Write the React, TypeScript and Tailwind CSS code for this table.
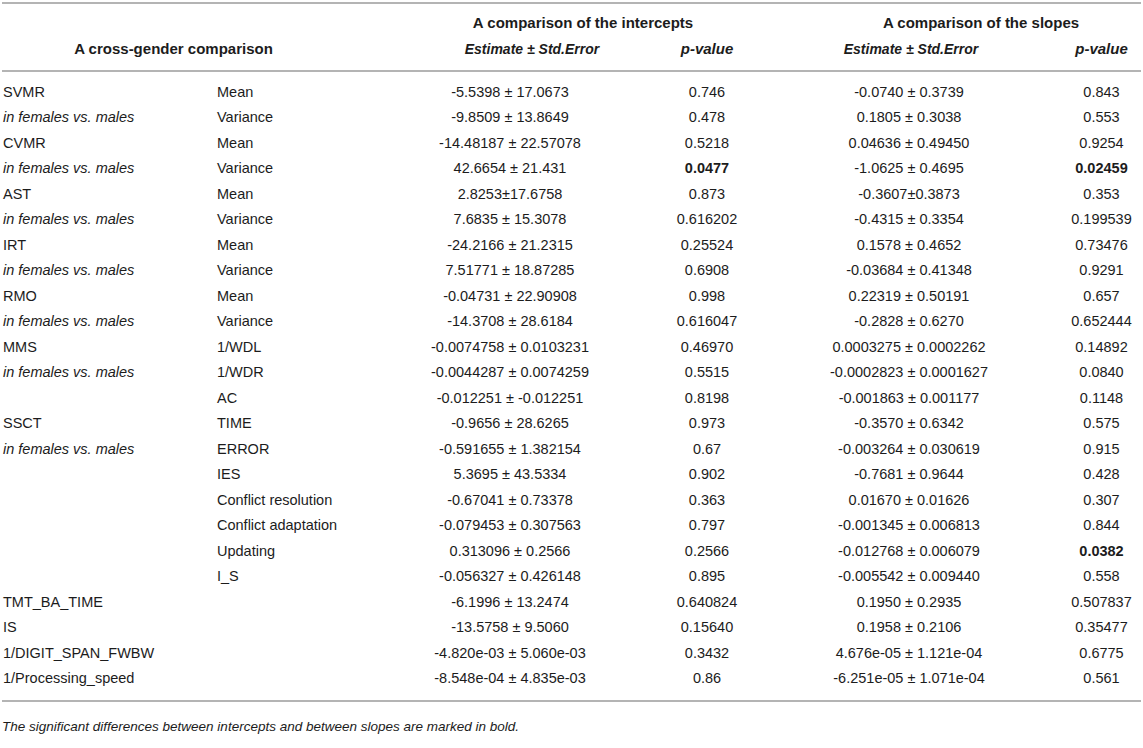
const rows: [string, string, string, string, string, string, boolean?, boolean?][] = [
  ['SVMR', 'Mean', '-5.5398 ± 17.0673', '0.746', '-0.0740 ± 0.3739', '0.843'],
  ['in females vs. males', 'Variance', '-9.8509 ± 13.8649', '0.478', '0.1805 ± 0.3038', '0.553'],
  ['CVMR', 'Mean', '-14.48187 ± 22.57078', '0.5218', '0.04636 ± 0.49450', '0.9254'],
  ['in females vs. males', 'Variance', '42.6654 ± 21.431', '0.0477', '-1.0625 ± 0.4695', '0.02459', true, true],
  ['AST', 'Mean', '2.8253±17.6758', '0.873', '-0.3607±0.3873', '0.353'],
  ['in females vs. males', 'Variance', '7.6835 ± 15.3078', '0.616202', '-0.4315 ± 0.3354', '0.199539'],
  ['IRT', 'Mean', '-24.2166 ± 21.2315', '0.25524', '0.1578 ± 0.4652', '0.73476'],
  ['in females vs. males', 'Variance', '7.51771 ± 18.87285', '0.6908', '-0.03684 ± 0.41348', '0.9291'],
  ['RMO', 'Mean', '-0.04731 ± 22.90908', '0.998', '0.22319 ± 0.50191', '0.657'],
  ['in females vs. males', 'Variance', '-14.3708 ± 28.6184', '0.616047', '-0.2828 ± 0.6270', '0.652444'],
  ['MMS', '1/WDL', '-0.0074758 ± 0.0103231', '0.46970', '0.0003275 ± 0.0002262', '0.14892'],
  ['in females vs. males', '1/WDR', '-0.0044287 ± 0.0074259', '0.5515', '-0.0002823 ± 0.0001627', '0.0840'],
  ['', 'AC', '-0.012251 ± -0.012251', '0.8198', '-0.001863 ± 0.001177', '0.1148'],
  ['SSCT', 'TIME', '-0.9656 ± 28.6265', '0.973', '-0.3570 ± 0.6342', '0.575'],
  ['in females vs. males', 'ERROR', '-0.591655 ± 1.382154', '0.67', '-0.003264 ± 0.030619', '0.915'],
  ['', 'IES', '5.3695 ± 43.5334', '0.902', '-0.7681 ± 0.9644', '0.428'],
  ['', 'Conflict resolution', '-0.67041 ± 0.73378', '0.363', '0.01670 ± 0.01626', '0.307'],
  ['', 'Conflict adaptation', '-0.079453 ± 0.307563', '0.797', '-0.001345 ± 0.006813', '0.844'],
  ['', 'Updating', '0.313096 ± 0.2566', '0.2566', '-0.012768 ± 0.006079', '0.0382', false, true],
  ['', 'I_S', '-0.056327 ± 0.426148', '0.895', '-0.005542 ± 0.009440', '0.558'],
  ['TMT_BA_TIME', '', '-6.1996 ± 13.2474', '0.640824', '0.1950 ± 0.2935', '0.507837'],
  ['IS', '', '-13.5758 ± 9.5060', '0.15640', '0.1958 ± 0.2106', '0.35477'],
  ['1/DIGIT_SPAN_FWBW', '', '-4.820e-03 ± 5.060e-03', '0.3432', '4.676e-05 ± 1.121e-04', '0.6775'],
  ['1/Processing_speed', '', '-8.548e-04 ± 4.835e-03', '0.86', '-6.251e-05 ± 1.071e-04', '0.561'],
];

const cols = 'grid grid-cols-[209px_201px_200px_194px_256px_83px]';

export default function App() {
  return (
    <div className="w-[1143px] h-[748px] bg-white pt-[2px] text-[14.5px] text-[#1c1c1c] font-['Liberation_Sans',Arial,sans-serif] overflow-hidden">
      <div className="mx-[2px] h-[2px] bg-[#b4b4b4]" />

      {/* header */}
      <div className={`${cols} pt-[6px] pb-[8px] font-bold text-[15px]`}>
        <div className="col-span-2 row-span-2 flex items-center justify-center pr-[63px] pt-[26px]">
          A cross-gender comparison
        </div>
        <div className="col-span-2 h-[26px] flex items-center justify-center pr-[48px]">
          A comparison of the intercepts
        </div>
        <div className="col-span-2 h-[26px] flex items-center justify-center pl-[15px]">
          A comparison of the slopes
        </div>
        <div className="h-[26px] flex items-center justify-center pl-[44px] italic text-[14px]">Estimate ± Std.Error</div>
        <div className="h-[26px] flex items-center justify-center italic">p-value</div>
        <div className="h-[26px] flex items-center justify-center pr-[42px] italic text-[14px]">Estimate ± Std.Error</div>
        <div className="h-[26px] flex items-center justify-center italic">p-value</div>
      </div>
      <div className="mx-[2px] h-[2px] bg-[#b4b4b4]" />

      {/* body */}
      <div className="pt-[8px] pb-[8px]">
        {rows.map((r, i) => (
          <div key={i} className={`${cols} h-[25.5px] items-center whitespace-nowrap`}>
            <div className={`pl-[3px] ${r[0].startsWith('in ') ? 'italic' : ''}`}>{r[0]}</div>
            <div className="pl-[8px]">{r[1]}</div>
            <div className="text-center">{r[2]}</div>
            <div className={`text-center ${r[6] ? 'font-bold' : ''}`}>{r[3]}</div>
            <div className="text-center pr-[46px]">{r[4]}</div>
            <div className={`text-center ${r[7] ? 'font-bold' : ''}`}>{r[5]}</div>
          </div>
        ))}
      </div>
      <div className="mx-[2px] h-[2px] bg-[#b4b4b4]" />

      <p className="pl-[2px] pt-[15px] text-[13.5px] italic">
        The significant differences between intercepts and between slopes are marked in bold.
      </p>
    </div>
  );
}
